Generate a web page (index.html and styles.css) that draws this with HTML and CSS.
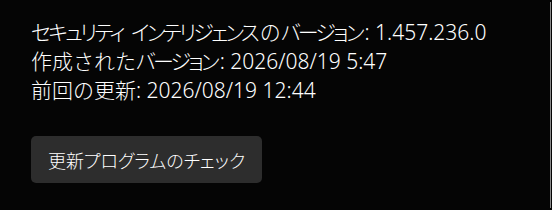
FILE: index.html
```html
<!DOCTYPE html>
<html lang="ja">
<head>
  <meta charset="UTF-8">
  <meta name="viewport" content="width=device-width, initial-scale=1.0">
  <title>更新</title>
  <link rel="stylesheet" href="styles.css">
</head>
<body>
  <div class='page'>
    <div class='content'>
      <div class='info'>
        <div class='line'><span class='kana'>セキュリティ</span> <span class='kana'>インテリジェンス</span>の<span class='kana'>バージョン</span>: 1.457.236.0</div>
        <div class='line'>作成された<span class='kana'>バージョン</span>: 2026/08/19 5:47</div>
        <div class='line'>前回の更新: 2026/08/19 12:44</div>
      </div>
      <div class='btn'>更新プログラムのチェック</div>
    </div>
    <div class='scroll'></div>
  </div>
</body>
</html>
```

FILE: styles.css
```css
html, body{
  margin:0px;
  height:100%;
  background-color:#050505;
}
body{
  font-family:"Noto Sans", "Noto Sans CJK JP", sans-serif;
  font-weight:300;
  color:#ffffff;
}
.page{
  display:flex;
  height:100%;
}
.content{
  flex:1;
  padding:18px 0 0 31px;
}
.info{
  font-size:21px;
  line-height:29px;
}
/* カタカナは詰める */
.kana{
  font-feature-settings:"palt";
  letter-spacing:-2.8px;
  padding-right:2.8px;
}
.btn{
  display:inline-flex;
  align-items:center;
  justify-content:center;
  margin-top:31px;
  width:231px;
  height:47px;
  box-sizing:border-box;
  background-color:#2d2d2d;
  border-radius:5px;
  font-size:18px;
  font-feature-settings:"palt";
}
.scroll{
  width:1px;
  margin:2px 1px 2px 0;
  background-color:#8a8a8a;
}
```
